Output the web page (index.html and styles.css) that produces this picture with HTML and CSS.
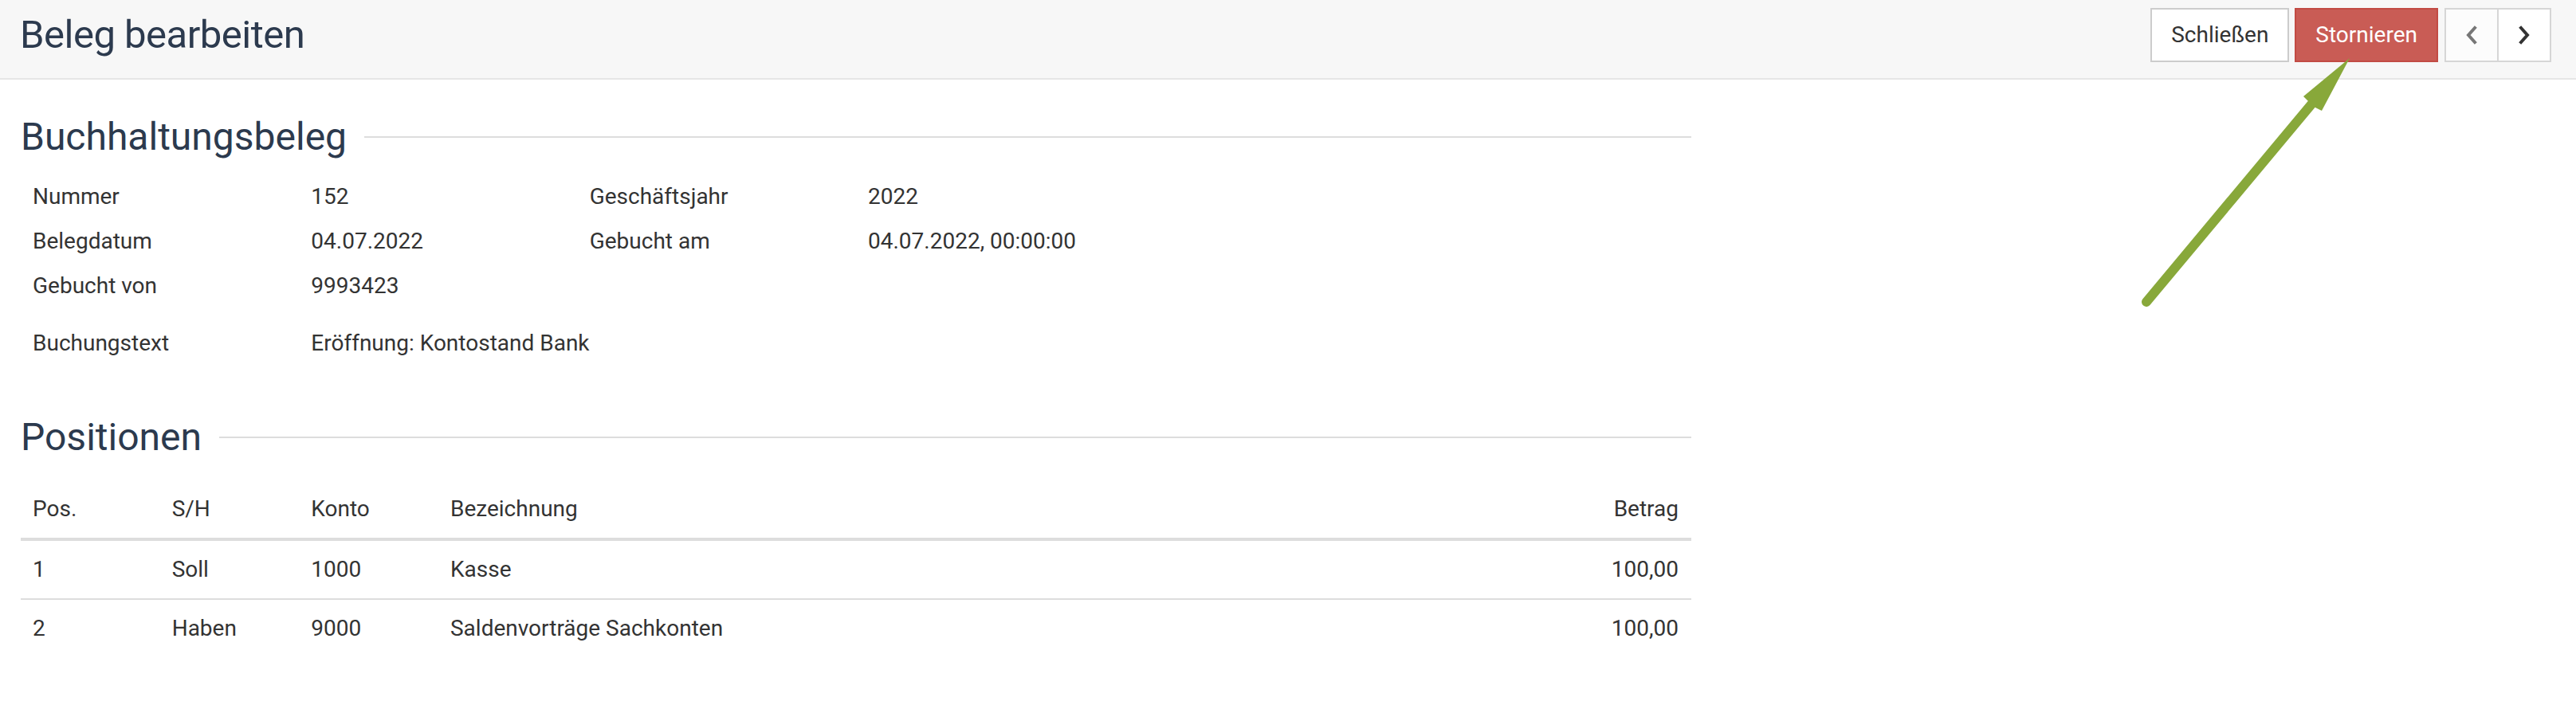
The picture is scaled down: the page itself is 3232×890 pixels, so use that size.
FILE: index.html
```html
<!DOCTYPE html>
<html lang="de">
<head>
<meta charset="utf-8">
<title>Beleg bearbeiten</title>
<link rel="stylesheet" href="styles.css">
</head>
<body>
<header class="topbar">
  <h1 class="page-title">Beleg bearbeiten</h1>
  <div class="actions">
    <button class="btn btn-default" type="button">Schließen</button>
    <button class="btn btn-danger" type="button">Stornieren</button>
    <div class="btn-group">
      <button class="btn btn-default btn-icon btn-disabled" type="button" aria-label="Zurück">
        <svg class="chevron" viewBox="0 0 16 24" width="16" height="24"><polyline points="12,3 4,12 12,21" /></svg>
      </button>
      <button class="btn btn-default btn-icon" type="button" aria-label="Weiter">
        <svg class="chevron" viewBox="0 0 16 24" width="16" height="24"><polyline points="4,3 12,12 4,21" /></svg>
      </button>
    </div>
  </div>
</header>

<main class="content">
  <section class="section">
    <h2 class="section-title">Buchhaltungsbeleg</h2>
    <div class="info-grid">
      <div class="cell label">Nummer</div>
      <div class="cell value">152</div>
      <div class="cell label">Geschäftsjahr</div>
      <div class="cell value">2022</div>
      <div class="cell filler"></div>
      <div class="cell filler"></div>

      <div class="cell label">Belegdatum</div>
      <div class="cell value">04.07.2022</div>
      <div class="cell label">Gebucht am</div>
      <div class="cell value">04.07.2022, 00:00:00</div>
      <div class="cell filler"></div>
      <div class="cell filler"></div>

      <div class="cell label">Gebucht von</div>
      <div class="cell value">9993423</div>
      <div class="cell filler"></div>
      <div class="cell filler"></div>
      <div class="cell filler"></div>
      <div class="cell filler"></div>
    </div>
    <div class="info-grid info-text">
      <div class="cell label">Buchungstext</div>
      <div class="cell value wide">Eröffnung: Kontostand Bank</div>
    </div>
  </section>

  <section class="section">
    <h2 class="section-title">Positionen</h2>
    <table class="positions">
      <colgroup>
        <col class="col-narrow">
        <col class="col-narrow">
        <col class="col-narrow">
        <col>
        <col class="col-amount">
      </colgroup>
      <thead>
        <tr>
          <th>Pos.</th>
          <th>S/H</th>
          <th>Konto</th>
          <th>Bezeichnung</th>
          <th class="num">Betrag</th>
        </tr>
      </thead>
      <tbody>
        <tr>
          <td>1</td>
          <td>Soll</td>
          <td>1000</td>
          <td>Kasse</td>
          <td class="num">100,00</td>
        </tr>
        <tr>
          <td>2</td>
          <td>Haben</td>
          <td>9000</td>
          <td>Saldenvorträge Sachkonten</td>
          <td class="num">100,00</td>
        </tr>
      </tbody>
    </table>
  </section>
</main>

<svg class="annotation-arrow" viewBox="0 0 3232 890" width="3232" height="890" aria-hidden="true">
  <line x1="2693" y1="379" x2="2900" y2="131" class="arrow-shaft" />
  <polygon points="2948,73 2890,121 2896,127 2905,135 2913,139" class="arrow-head" />
</svg>
</body>
</html>
```

FILE: styles.css
```css
* {
  box-sizing: border-box;
}

html, body {
  margin: 0;
  padding: 0;
  background: #ffffff;
}

body {
  position: relative;
  width: 3232px;
  min-height: 890px;
  font-family: Roboto, "Liberation Sans", Arial, sans-serif;
  font-size: 28px;
  line-height: 40px;
  color: #333333;
}

/* ---------- top bar ---------- */
.topbar {
  display: flex;
  justify-content: space-between;
  align-items: flex-start;
  height: 100px;
  background: #f7f7f7;
  border-bottom: 2px solid #e6e6e6;
}

.page-title {
  margin: 16px 0 0 0;
  padding-left: 25px;
  font-size: 49px;
  line-height: 56px;
  font-weight: 400;
  color: #2c3a4e;
  letter-spacing: -0.5px;
}

.actions {
  display: flex;
  gap: 7px;
  margin: 10px 31px 0 0;
}

.btn {
  height: 68px;
  padding: 0 24px;
  border: 2px solid #cccccc;
  border-radius: 0;
  background: #ffffff;
  font-family: Roboto, "Liberation Sans", Arial, sans-serif;
  font-size: 28px;
  line-height: 40px;
  color: #333333;
  display: flex;
  align-items: center;
  justify-content: center;
  cursor: pointer;
}

.btn-danger {
  background: #c95c55;
  border-color: #c24b44;
  color: #ffffff;
}

.btn-group {
  display: flex;
  margin-left: 1px;
}

.btn-icon {
  width: 68px;
  padding: 0;
  border-color: #d6d6d6;
}

.btn-icon + .btn-icon {
  margin-left: -2px;
}

.btn-disabled {
  background: #fcfcfc;
}

.chevron {
  display: block;
  fill: none;
  stroke: #333333;
  stroke-width: 4;
  stroke-linecap: square;
  stroke-linejoin: miter;
}

.btn-disabled .chevron {
  stroke: #777777;
}

/* ---------- content ---------- */
.content {
  width: 2096px;
  margin-left: 26px;
  padding-top: 46px;
  display: flex;
  flex-direction: column;
  gap: 64px;
}

.section-title {
  display: flex;
  align-items: center;
  margin: 0 0 21px 0;
  font-size: 48px;
  line-height: 52px;
  font-weight: 400;
  color: #2c3a4e;
}

.section-title::after {
  content: "";
  flex: 1;
  height: 2px;
  margin-left: 22px;
  background: #dddddd;
}

.info-grid {
  display: grid;
  grid-template-columns: repeat(6, 1fr);
}

.info-text {
  margin-top: 16px;
}

.cell {
  padding: 8px 15px;
  line-height: 40px;
  min-height: 56px;
}

.value.wide {
  grid-column: span 5;
}

/* ---------- positions table ---------- */
.positions {
  width: 100%;
  margin-top: 28px;
  border-collapse: collapse;
  table-layout: fixed;
}

.col-narrow {
  width: 174.67px;
}

.positions th,
.positions td {
  padding: 16px 16px 16px 15px;
  text-align: left;
  font-weight: 400;
  line-height: 40px;
  vertical-align: top;
}

.positions thead th {
  border-bottom: 4px solid #dddddd;
}

.positions tbody tr + tr td {
  border-top: 2px solid #dddddd;
}

.positions .num {
  text-align: right;
}

/* ---------- annotation ---------- */
.annotation-arrow {
  position: absolute;
  left: 0;
  top: 0;
  pointer-events: none;
}

.arrow-shaft {
  stroke: #88a83a;
  stroke-width: 12;
  stroke-linecap: round;
}

.arrow-head {
  fill: #88a83a;
}
```
